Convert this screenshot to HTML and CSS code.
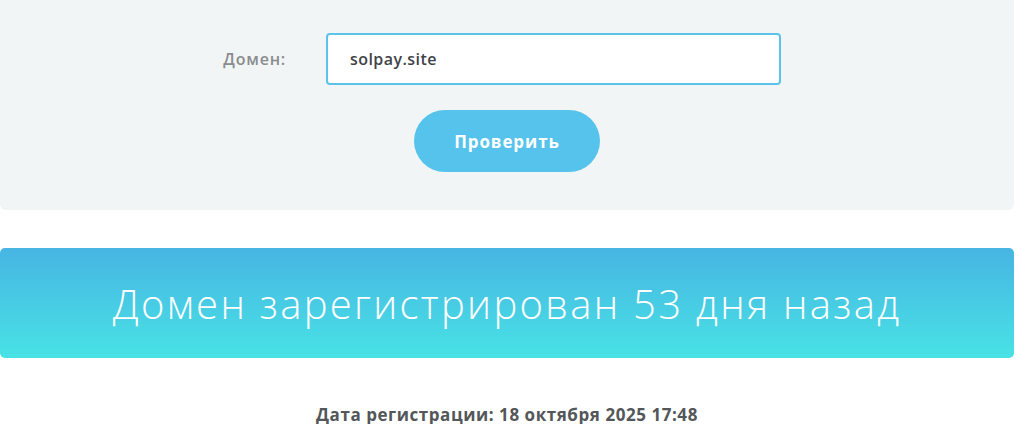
FILE: index.html
```html
<!DOCTYPE html>
<html lang="ru">
<head>
<meta charset="utf-8">
<link rel="stylesheet" href="styles.css">
</head>
<body>
<div class="page">
  <form class="check-panel">
    <div class="field-row">
      <label class="field-label" for="domain">Домен:</label>
      <div class="field-input-wrap">
        <input id="domain" class="field-input" type="text" value="solpay.site">
      </div>
    </div>
    <div class="button-row">
      <button type="button" class="check-button">Проверить</button>
    </div>
  </form>
  <div class="result-banner">
    <h1 class="result-title">Домен зарегистрирован 53 дня назад</h1>
  </div>
  <p class="reg-date">Дата регистрации: 18 октября 2025 17:48</p>
</div>
</body>
</html>
```
FILE: styles.css
```css
html, body {
  margin: 0;
  padding: 0;
  background: #ffffff;
}
body {
  font-family: "Open Sans", "Noto Sans", sans-serif;
}
.page {
  width: 1014px;
}
.check-panel {
  background: #f2f5f6;
  border-radius: 0 0 6px 6px;
  padding: 33px 0 38px;
  margin: 0;
}
.field-row {
  display: flex;
  align-items: center;
}
.field-label {
  width: 286px;
  text-align: right;
  font-size: 16px;
  font-weight: 600;
  color: #8a8c8e;
  letter-spacing: 0.8px;
}
.field-input-wrap {
  margin-left: 40px;
}
.field-input {
  box-sizing: border-box;
  width: 455px;
  height: 52px;
  border: 2px solid #5bc3e9;
  border-radius: 4px;
  background: #fff;
  padding: 0 0 0 22px;
  font-family: inherit;
  font-size: 16px;
  font-weight: 600;
  letter-spacing: 0.45px;
  color: #3f4347;
  outline: none;
}
.button-row {
  display: flex;
  justify-content: center;
  margin-top: 25px;
}
.check-button {
  width: 186px;
  height: 62px;
  border: none;
  border-radius: 31px;
  background: #55c3ec;
  color: #fff;
  font-family: inherit;
  font-size: 17px;
  font-weight: 700;
  letter-spacing: 0.9px;
  cursor: pointer;
}
.result-banner {
  margin-top: 38px;
  height: 110px;
  border-radius: 5px;
  background: linear-gradient(180deg, #47b5e3 0%, #48e2e5 100%);
  display: flex;
  align-items: center;
  justify-content: center;
}
.result-title {
  margin: 0;
  font-size: 40px;
  font-weight: 300;
  letter-spacing: 2.3px;
  color: #fff;
}
.reg-date {
  margin: 48px 0 0;
  text-align: center;
  font-size: 17px;
  line-height: 18px;
  font-weight: 700;
  letter-spacing: 0.55px;
  color: #54575a;
}
```
